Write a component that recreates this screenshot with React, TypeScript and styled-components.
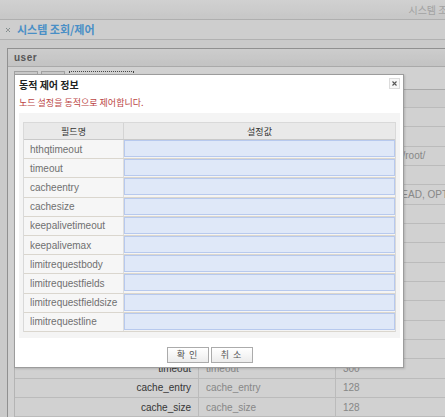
import styled, { createGlobalStyle } from 'styled-components'

const GlobalStyle = createGlobalStyle`
  html, body {
    margin: 0;
    padding: 0;
    overflow: hidden;
  }
  body {
    font-family: "Liberation Sans", "Noto Sans CJK KR", sans-serif;
    background: #f7f7f7;
  }
`

const KR = `"Noto Sans CJK KR", "Liberation Sans", sans-serif`

type BgRow = { label: string; key: string; value: string }

const bgRows: BgRow[] = [
  { label: 'servername', key: 'servername', value: 'localhost' },
  { label: 'listen', key: 'listen', value: '80' },
  { label: 'documentroot', key: 'documentroot', value: '/usr/local/app/root/' },
  { label: 'user', key: 'user', value: 'nobody' },
  { label: 'allowmethods', key: 'allowmethods', value: 'GET,POST,HEAD, OPTIONS' },
  { label: 'hthqtimeout', key: 'hthqtimeout', value: '60' },
  { label: 'keepalive', key: 'keepalive', value: 'on' },
  { label: 'keepalivetimeout', key: 'keepalivetimeout', value: '15' },
  { label: 'keepalivemax', key: 'keepalivemax', value: '100' },
  { label: 'limitrequestbody', key: 'limitrequestbody', value: '0' },
  { label: 'limitrequestfields', key: 'limitrequestfields', value: '100' },
  { label: 'limitrequestline', key: 'limitrequestline', value: '8190' },
  { label: 'loglevel', key: 'loglevel', value: 'warn' },
  { label: 'timeout', key: 'timeout', value: '300' },
  { label: 'cache_entry', key: 'cache_entry', value: '128' },
  { label: 'cache_size', key: 'cache_size', value: '128' },
]

const fields = [
  'hthqtimeout',
  'timeout',
  'cacheentry',
  'cachesize',
  'keepalivetimeout',
  'keepalivemax',
  'limitrequestbody',
  'limitrequestfields',
  'limitrequestfieldsize',
  'limitrequestline',
]

const Page = styled.div`
  position: relative;
  width: 500px;
  height: 417px;
  overflow: hidden;
`

const TopBar = styled.div`
  height: 19px;
  border-bottom: 1px solid #d6d6d6;
  background: linear-gradient(#ffffff, #f3f3f3);
  display: flex;
  justify-content: flex-end;
  align-items: center;
  padding-right: 21px;
  font-family: ${KR};
  font-size: 10px;
  color: #c6c6c6;
`

const TitleBar = styled.div`
  height: 19px;
  border-bottom: 1px solid #d8d8d8;
  background: #fcfcfc;
  display: flex;
  align-items: center;
  padding-left: 6px;
  gap: 7px;
`

const Title = styled.span`
  font-family: ${KR};
  font-size: 11px;
  font-weight: bold;
  color: #5aaff2;
  line-height: 19px;
`

const Section = styled.div`
  padding: 8px 0 0 7px;
`

const Panel = styled.div`
  border: 1px solid #b0b0b0;
  border-right: none;
  background: #fff;
`

const PanelHeader = styled.div`
  height: 17px;
  border-bottom: 1px solid #cfcfcf;
  background: linear-gradient(#fafafa, #eeeeee);
  display: flex;
  align-items: center;
  padding-left: 6px;
  font-size: 10px;
  font-weight: bold;
  letter-spacing: 0.5px;
  color: #6a6a6a;
`

const PanelBody = styled.div`
  padding: 4px 0 0 6px;
`

const Tabs = styled.div`
  display: flex;
  gap: 3px;
  height: 18px;
`

const Tab = styled.div<{ $w: number; $active?: boolean }>`
  width: ${(p) => p.$w}px;
  box-sizing: border-box;
  border: 1px ${(p) => (p.$active ? 'dotted #555' : 'solid #c4c4c4')};
  border-bottom: none;
  background: ${(p) => (p.$active ? '#fff' : '#f5f5f5')};
  margin-left: ${(p) => (p.$active ? 1 : 0)}px;
`

const BgTable = styled.div`
  border-top: 1px solid #cfcfcf;
  border-left: 1px solid #dcdcdc;
`

const BgRowLine = styled.div<{ $head?: boolean }>`
  display: grid;
  grid-template-columns: 184px 137px 1fr;
  height: ${(p) => (p.$head ? 18 : 19.33)}px;
  box-sizing: border-box;
  border-bottom: 1px solid #e4e4e4;
  background: ${(p) => (p.$head ? '#f9f9f9' : '#fff')};
  font-size: 10px;
`

const BgCell = styled.div<{ $kind: 'label' | 'key' | 'value' }>`
  display: flex;
  align-items: center;
  justify-content: ${(p) => (p.$kind === 'label' ? 'flex-end' : 'flex-start')};
  padding: ${(p) => (p.$kind === 'label' ? '0 7px 0 0' : '0 0 0 7px')};
  border-right: ${(p) => (p.$kind === 'value' ? 'none' : '1px solid #e4e4e4')};
  color: ${(p) => (p.$kind === 'label' ? '#444' : '#a6a6a6')};
  white-space: nowrap;
  overflow: hidden;
`

const HeadCell = styled(BgCell)`
  font-family: ${KR};
  font-size: 9px;
  color: #666;
`

const Overlay = styled.div`
  position: absolute;
  inset: 0;
  background: rgba(0, 0, 0, 0.18);
`

const Modal = styled.div`
  position: absolute;
  left: 14px;
  top: 74px;
  width: 390px;
  box-sizing: border-box;
  border: 1px solid #9c9c9c;
  background: #fff;
  padding: 3px 3px 4px 4px;
  box-shadow: 1px 1px 2px rgba(0, 0, 0, 0.15);
`

const ModalHeader = styled.div`
  display: flex;
  justify-content: space-between;
  align-items: flex-start;
  height: 14px;
`

const ModalTitle = styled.div`
  font-family: ${KR};
  font-size: 10px;
  font-weight: bold;
  color: #222;
  line-height: 14px;
`

const CloseButton = styled.button`
  width: 11px;
  height: 11px;
  padding: 0;
  border: 1px solid #dcdcdc;
  background: #f7f7f7;
  display: flex;
  align-items: center;
  justify-content: center;
`

const SubTitle = styled.div`
  margin-top: 4px;
  font-family: ${KR};
  font-size: 9px;
  line-height: 14px;
  color: #bb4444;
`

const FormBox = styled.div`
  margin-top: 3px;
  background: #f4f4f4;
  padding: 9px 4px 6px;
`

const FormTable = styled.div`
  border: 1px solid #d9d9d9;
  border-bottom: none;
`

const FormHead = styled.div`
  display: grid;
  grid-template-columns: 100px 1fr;
  height: 17px;
  box-sizing: border-box;
  border-bottom: 1px solid #c9c9c9;
  background: #e9e9e9;
`

const FormHeadCell = styled.div<{ $first?: boolean }>`
  display: flex;
  align-items: center;
  justify-content: center;
  border-right: ${(p) => (p.$first ? '1px solid #d4d4d4' : 'none')};
  font-family: ${KR};
  font-size: 9px;
  color: #333;
`

const FormRow = styled.div`
  display: grid;
  grid-template-columns: 100px 1fr;
  height: 19.2px;
  box-sizing: border-box;
  border-bottom: 1px solid #dad6ce;
`

const FieldName = styled.div`
  display: flex;
  align-items: center;
  padding-left: 6px;
  background: #f6f6f6;
  border-right: 1px solid #dddddd;
  font-size: 10px;
  color: #707070;
`

const FieldCell = styled.div`
  padding: 0 0 1px 0;
  display: flex;
`

const FieldInput = styled.input`
  flex: 1;
  min-width: 0;
  height: 17px;
  box-sizing: border-box;
  margin: 0;
  border: 1px solid #b7c9ee;
  background: #dfe8f8;
  outline: none;
  font-size: 10px;
`

const Footer = styled.div`
  margin-top: 9px;
  display: flex;
  justify-content: center;
  gap: 2px;
`

const Button = styled.button`
  width: 42px;
  height: 16px;
  padding: 0;
  border: 1px solid #ababab;
  background: linear-gradient(#ffffff, #ececec);
  font-family: ${KR};
  font-size: 9px;
  line-height: 14px;
  letter-spacing: 1px;
  color: #555;
  white-space: pre;
`

const Bullet = () => (
  <svg width="4" height="4" viewBox="0 0 4 4">
    <rect x="0" y="0" width="1" height="1" fill="#9aa" />
    <rect x="3" y="0" width="1" height="1" fill="#9aa" />
    <rect x="0" y="3" width="1" height="1" fill="#9aa" />
    <rect x="3" y="3" width="1" height="1" fill="#9aa" />
    <rect x="1" y="1" width="2" height="2" fill="#bbb" />
  </svg>
)

const CloseIcon = () => (
  <svg width="5" height="5" viewBox="0 0 5 5">
    <path d="M0.5 0.5 L4.5 4.5 M4.5 0.5 L0.5 4.5" stroke="#555" strokeWidth="1.1" />
  </svg>
)

export default function App() {
  return (
    <Page>
      <GlobalStyle />
      <TopBar>시스템 조회/제어</TopBar>
      <TitleBar>
        <Bullet />
        <Title>시스템 조회/제어</Title>
      </TitleBar>
      <Section>
        <Panel>
          <PanelHeader>user</PanelHeader>
          <PanelBody>
            <Tabs>
              <Tab $w={24} />
              <Tab $w={24} />
              <Tab $w={65} $active />
            </Tabs>
            <BgTable>
              <BgRowLine $head>
                <HeadCell $kind="label" />
                <HeadCell $kind="key" />
                <HeadCell $kind="value" />
              </BgRowLine>
              {bgRows.map((r) => (
                <BgRowLine key={r.key}>
                  <BgCell $kind="label">{r.label}</BgCell>
                  <BgCell $kind="key">{r.key}</BgCell>
                  <BgCell $kind="value">{r.value}</BgCell>
                </BgRowLine>
              ))}
            </BgTable>
          </PanelBody>
        </Panel>
      </Section>

      <Overlay />

      <Modal>
        <ModalHeader>
          <ModalTitle>동적 제어 정보</ModalTitle>
          <CloseButton>
            <CloseIcon />
          </CloseButton>
        </ModalHeader>
        <SubTitle>노드 설정을 동적으로 제어합니다.</SubTitle>
        <FormBox>
          <FormTable>
            <FormHead>
              <FormHeadCell $first>필드명</FormHeadCell>
              <FormHeadCell>설정값</FormHeadCell>
            </FormHead>
            {fields.map((f) => (
              <FormRow key={f}>
                <FieldName>{f}</FieldName>
                <FieldCell>
                  <FieldInput />
                </FieldCell>
              </FormRow>
            ))}
          </FormTable>
        </FormBox>
        <Footer>
          <Button>확 인</Button>
          <Button>취 소</Button>
        </Footer>
      </Modal>
    </Page>
  )
}
